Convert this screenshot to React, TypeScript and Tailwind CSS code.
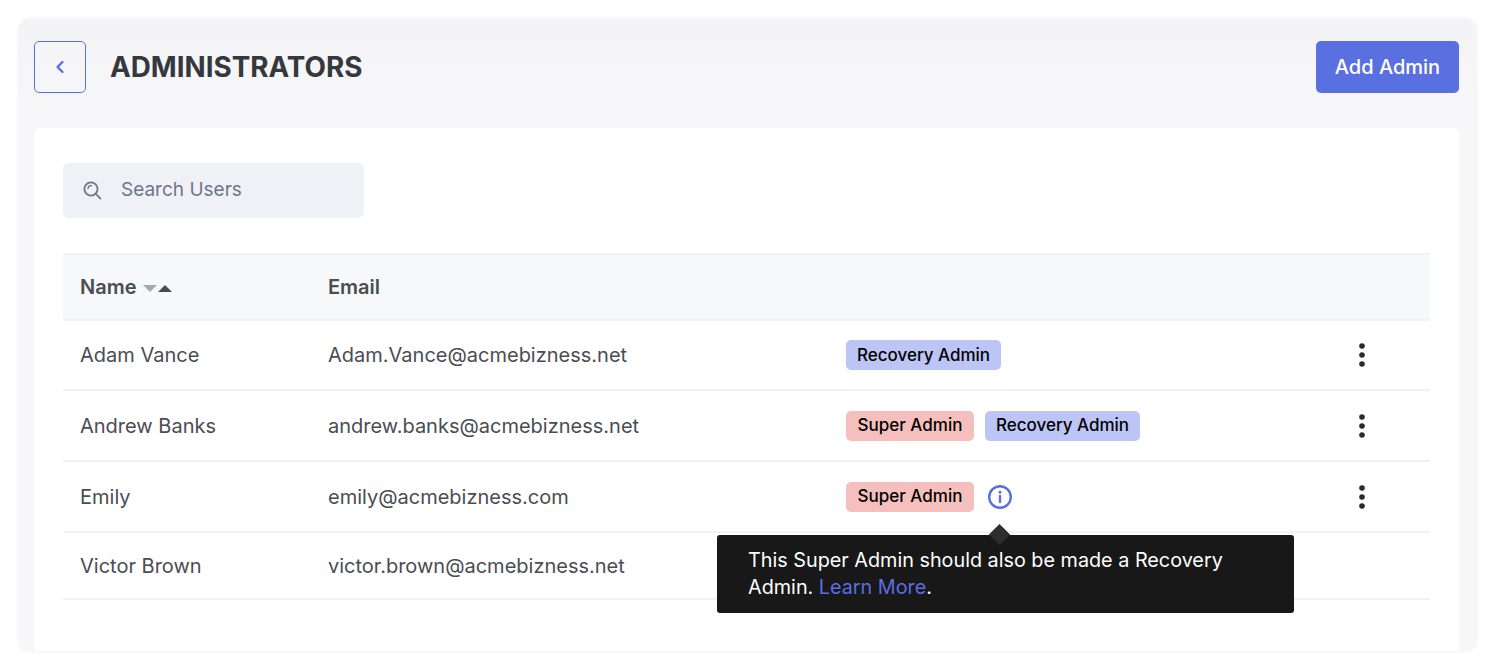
import React from "react";

const font = { fontFamily: "Inter, 'Noto Sans', sans-serif" };

function Badge({ kind }: { kind: "super" | "recovery" }) {
  return kind === "super" ? (
    <span className="flex h-[30px] w-[128px] items-center justify-center rounded-[5px] bg-[#f5bfbd] pt-px text-[17px] font-medium text-black">Super Admin</span>
  ) : (
    <span className="flex h-[30px] w-[155px] items-center justify-center rounded-[5px] bg-[#bcc5f6] pt-px text-[17px] font-medium text-black">Recovery Admin</span>
  );
}

function Dots() {
  return (
    <svg width="6" height="24" viewBox="0 0 6 24" className="text-[#2b2b2b]" fill="currentColor">
      <circle cx="3" cy="3" r="2.8" />
      <circle cx="3" cy="12" r="2.8" />
      <circle cx="3" cy="21" r="2.8" />
    </svg>
  );
}

function Row({ name, email, height, children, dots = true }: { name: string; email: string; height: string; children: React.ReactNode; dots?: boolean }) {
  return (
    <div className={`flex items-center border-b-2 border-[#f1f1f8] ${height}`}>
      <div className="w-[265px] pl-[17px] text-[20px] text-[#4a4d52]">{name}</div>
      <div className="w-[518px] text-[20px] text-[#4a4d52]">{email}</div>
      <div className="relative flex flex-1 items-center gap-[11px]">{children}</div>
      <div className="flex w-[71px] justify-start">{dots && <Dots />}</div>
    </div>
  );
}

export default function App() {
  return (
    <div style={font} className="h-[670px] w-[1495px] overflow-hidden bg-white pl-[19px] pr-[19px] pt-[19px]">
      <div className="flex h-[632px] flex-col rounded-[10px] bg-gradient-to-b from-[#f4f4f7] to-[#f7f7fa] to-[15%] pl-[15px] pr-[17px] pt-[22px] shadow-[0_0_4px_rgba(0,0,0,0.08)]">
        <div className="flex h-[52px] items-center justify-between">
          <div className="flex items-center gap-6">
            <button className="flex h-[52px] w-[52px] items-center justify-center rounded-[5px] border-[1.5px] border-[#5a6fe0]">
              <svg width="10" height="14" viewBox="0 0 10 14" fill="none" stroke="#5a6fe0" strokeWidth="2.3" strokeLinecap="round" strokeLinejoin="round">
                <path d="M7.5 2 L2.5 7 L7.5 12" />
              </svg>
            </button>
            <h1 className="pt-[2px] text-[27.8px] font-bold text-[#35383d]">ADMINISTRATORS</h1>
          </div>
          <button className="h-[52px] w-[143px] rounded-[5px] bg-[#5a6fe0] text-[20px] font-medium text-white">Add Admin</button>
        </div>
        <div className="mt-[35px] flex-1 rounded-t-[6px] bg-white pl-[29px] pr-[29px] pt-[35px]">
          <div className="flex h-[55px] w-[301px] items-center rounded-[6px] bg-[#f0f1f6] pl-[20px]">
            <svg width="19" height="19" viewBox="0 0 19 19" fill="none" stroke="#70748a" strokeWidth="1.8" strokeLinecap="round">
              <circle cx="8" cy="8" r="6.6" />
              <path d="M13 13 L17.4 17.6" />
              <path d="M5 7.5 A3.2 3.2 0 0 1 8.5 4.7" strokeWidth="1.4" />
            </svg>
            <span className="ml-[19px] text-[19px] text-[#70748a]">Search Users</span>
          </div>
          <div className="mt-[35px] flex h-[68px] items-center border-y-2 border-[#f1f2f6] bg-[#f7f8fa]">
            <div className="flex w-[265px] items-center pl-[17px]">
              <span className="text-[20px] font-semibold text-[#4a4d52]">Name</span>
              <svg width="30" height="9" viewBox="0 0 30 9" className="ml-[6px] mt-[2px]">
                <path d="M0 1 H14 L7 8 Z" fill="#a9a9a9" />
                <path d="M15 8 H29 L22 1 Z" fill="#4a4d52" />
              </svg>
            </div>
            <div className="text-[20px] font-semibold text-[#4a4d52]">Email</div>
          </div>
          <Row name="Adam Vance" email="Adam.Vance@acmebizness.net" height="h-[70px]">
            <Badge kind="recovery" />
          </Row>
          <Row name="Andrew Banks" email="andrew.banks@acmebizness.net" height="h-[71px]">
            <Badge kind="super" />
            <Badge kind="recovery" />
          </Row>
          <Row name="Emily" email="emily@acmebizness.com" height="h-[71px]">
            <Badge kind="super" />
            <svg width="26" height="26" viewBox="0 0 26 26" fill="none" stroke="#5a6fe0" strokeWidth="2.4" strokeLinecap="round" className="ml-[2px]">
              <circle cx="13" cy="13" r="10.8" />
              <path d="M13 12 V18" />
              <path d="M13 8.2 V8.4" strokeWidth="2.8" />
            </svg>
          </Row>
          <Row name="Victor Brown" email="victor.brown@acmebizness.net" height="h-[67px]" dots={false}>
            <Badge kind="super" />
            <Badge kind="recovery" />
            <div className="absolute left-[-129px] top-[-16px] z-10 h-[78px] w-[577px] rounded-[3px] bg-[#181818] pl-[31px] pr-[40px] pt-[12px] text-[19.8px] leading-[27.5px] text-white">
              <div className="absolute left-[275px] top-[-8px] h-[15px] w-[15px] rotate-45 bg-[#2e2e2e]" />
              <p className="relative">
                This Super Admin should also be made a Recovery Admin. <span className="text-[#5a6fe0]">Learn More</span>.
              </p>
            </div>
          </Row>
        </div>
      </div>
    </div>
  );
}
